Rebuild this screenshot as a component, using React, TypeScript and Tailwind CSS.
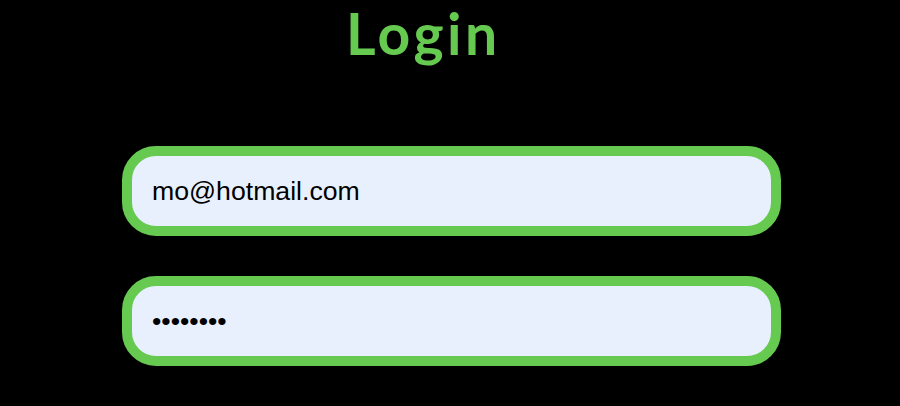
const inputClass =
  "w-[659px] h-[90px] rounded-[34px] border-[10px] border-[#66ca50] bg-[#e8f0fe] px-[20px] text-[26.67px] text-black outline-none font-['Liberation_Sans',Arial,sans-serif]"

export default function App() {
  return (
    <div className="min-h-[406px] w-[900px] bg-black overflow-hidden">
      <h1 className="pl-[346px] -mt-[3px] h-[75px] text-[57px] leading-[72px] font-bold tracking-[0.06em] text-[#66ca50] font-['Lato','Noto_Sans',sans-serif]">
        Login
      </h1>
      <form className="flex flex-col gap-[40px] pl-[122px] pt-[74px]">
        <input type="email" defaultValue="mo@hotmail.com" className={inputClass} />
        <input type="password" defaultValue="password" className={inputClass} />
      </form>
    </div>
  )
}
